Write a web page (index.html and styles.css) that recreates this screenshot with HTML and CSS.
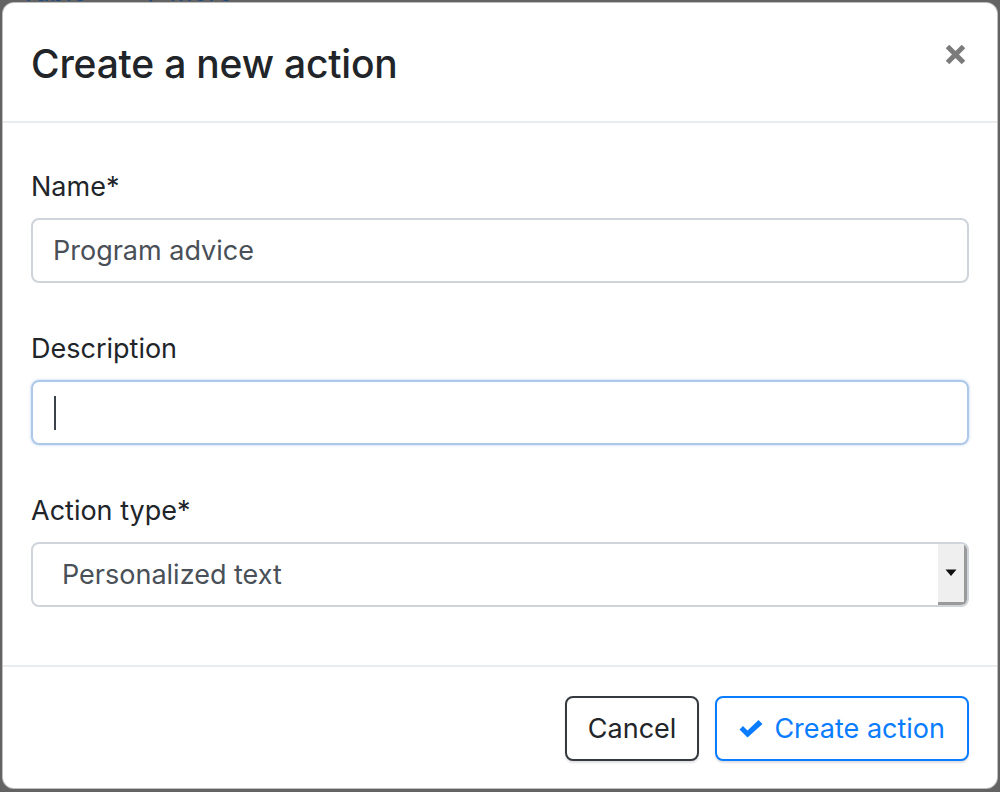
FILE: index.html
```html
<!DOCTYPE html>
<html lang="en">
<head>
<meta charset="utf-8">
<title>Create a new action</title>
<link rel="stylesheet" href="styles.css">
</head>
<body>
<div class="page-behind">
  <span class="behind-link">Table</span>
  <span class="behind-link behind-more">&#9881; More</span>
</div>
<div class="modal">
  <div class="modal-header">
    <h4 class="modal-title">Create a new action</h4>
    <button class="close" aria-label="Close">
      <svg width="21" height="21" viewBox="0 0 21 21"><path d="M2.5 2.5 L18.5 18.5 M18.5 2.5 L2.5 18.5" stroke="#7b7b7b" stroke-width="5" stroke-linecap="butt"/></svg>
    </button>
  </div>
  <div class="modal-body">
    <div class="form-group">
      <label class="label">Name*</label>
      <div class="form-control">Program advice</div>
    </div>
    <div class="form-group">
      <label class="label">Description</label>
      <div class="form-control focused"><span class="caret"></span></div>
    </div>
    <div class="form-group last">
      <label class="label">Action type*</label>
      <div class="select">
        <span class="select-text">Personalized text</span>
        <span class="select-btn"><svg width="12" height="8" viewBox="0 0 12 8"><path d="M0.5 0.5 L11.5 0.5 L6 7 Z" fill="#111"/></svg></span>
      </div>
    </div>
  </div>
  <div class="modal-footer">
    <button class="btn btn-cancel">Cancel</button>
    <button class="btn btn-primary">
      <svg class="check" width="24" height="18" viewBox="0 0 24 18"><path d="M0.5 9.5 L4 6 L8.5 10.5 L19.5 0 L23.5 4 L8.5 17.5 Z" fill="#0a7cff"/></svg>
      Create action
    </button>
  </div>
</div>
</body>
</html>
```

FILE: styles.css
```css
* { box-sizing: border-box; }
html, body { margin: 0; padding: 0; }
body {
  width: 1000px;
  height: 792px;
  background: #636363;
  font-family: Inter, "Noto Sans", "Liberation Sans", sans-serif;
  position: relative;
  overflow: hidden;
}
.page-behind {
  position: absolute;
  top: -20px;
  left: 20px;
  font-size: 26px;
  line-height: 24px;
  color: #1d4a7e;
  display: flex;
  gap: 52px;
}
.modal {
  position: relative;
  margin: 2px 2px 3px 2px;
  height: 787px;
  background: #fff;
  border: 1px solid rgba(0,0,0,.25);
  border-radius: 12px;
  display: flex;
  flex-direction: column;
}
.modal-header {
  display: flex;
  align-items: flex-start;
  justify-content: space-between;
  height: 120px;
  padding: 0 31px 0 28px;
  border-bottom: 2px solid #e9ecef;
}
.modal-title {
  margin: 0;
  align-self: center;
  padding-top: 5px;
  font-size: 39px;
  font-weight: 500;
  color: #212529;
  line-height: 1.2;
  letter-spacing: -0.2px;
}
.close {
  background: none;
  border: 0;
  padding: 0;
  width: 21px;
  height: 21px;
  display: flex;
  margin-top: 41px;
}
.modal-body {
  padding: 44px 28px 0 28px;
  flex: 1;
}
.form-group { margin-bottom: 46px; }
.form-group.last { margin-bottom: 0; }
.label {
  display: block;
  font-size: 27px;
  line-height: 40px;
  color: #212529;
  margin-bottom: 11px;
}
.form-control {
  height: 65px;
  border: 2px solid #ced4da;
  border-radius: 8px;
  padding: 0 20px;
  font-size: 27px;
  color: #495057;
  display: flex;
  align-items: center;
}
.form-control.focused {
  border-color: #adc8e8;
  box-shadow: 0 0 2px 1px rgba(140, 180, 230, .3);
}
.caret {
  display: block;
  width: 2px;
  height: 34px;
  background: #3c4249;
  margin-left: 1px;
}
.select {
  height: 65px;
  border: 2px solid #ced4da;
  border-radius: 8px;
  display: flex;
  align-items: stretch;
  font-size: 27px;
  color: #495057;
  overflow: hidden;
}
.select-text {
  flex: 1;
  display: flex;
  align-items: center;
  padding-left: 29px;
}
.select-btn {
  width: 29px;
  background: #efefef;
  border-right: 3px solid #9a9a9a;
  border-bottom: 3px solid #9a9a9a;
  display: flex;
  align-items: center;
  justify-content: center;
}
.modal-footer {
  border-top: 2px solid #e9ecef;
  height: 123px;
  padding: 2px 28px 0 28px;
  display: flex;
  align-items: center;
  justify-content: flex-end;
  gap: 16px;
}
.btn {
  height: 65px;
  border-radius: 8px;
  background: #fff;
  font-family: inherit;
  font-size: 27px;
  padding: 0 22px;
  display: flex;
  align-items: center;
  box-shadow: 0 2px 2px rgba(0,0,0,.12);
}
.btn-cancel {
  border: 2px solid #343a40;
  color: #212529;
  padding: 0 21px;
}
.btn-primary {
  border: 2px solid #0a7cff;
  color: #0a7cff;
  gap: 11px;
}
```
